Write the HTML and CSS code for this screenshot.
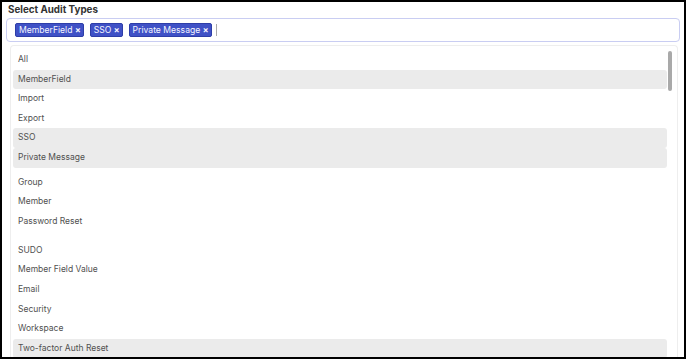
FILE: index.html
```html
<!DOCTYPE html>
<html>
<head>
<meta charset="utf-8">
<link rel="stylesheet" href="styles.css">
</head>
<body>
<div class="frame">
  <div class="title">Select Audit Types</div>
  <div class="input">
    <span class="tag">MemberField <span class="x">×</span></span>
    <span class="tag">SSO <span class="x">×</span></span>
    <span class="tag">Private Message <span class="x">×</span></span>
    <span class="caret"></span>
  </div>
  <div class="list">
    <div class="items">
      <div class="item">All</div>
      <div class="item sel">MemberField</div>
      <div class="item">Import</div>
      <div class="item">Export</div>
      <div class="item sel">SSO</div>
      <div class="item sel">Private Message</div>
      <div class="item gap1">Group</div>
      <div class="item">Member</div>
      <div class="item">Password Reset</div>
      <div class="item gap2">SUDO</div>
      <div class="item">Member Field Value</div>
      <div class="item">Email</div>
      <div class="item">Security</div>
      <div class="item">Workspace</div>
      <div class="item sel">Two-factor Auth Reset</div>
    </div>
    <div class="scroll">
      <div class="thumb"></div>
    </div>
  </div>
</div>
</body>
</html>
```

FILE: styles.css
```css
html, body {
  margin: 0;
  padding: 0;
  background: #fff;
}
.frame {
  width: 686px;
  height: 359px;
  box-sizing: border-box;
  border: 2px solid #000;
  overflow: hidden;
  font-family: Inter, "Liberation Sans", sans-serif;
  display: flex;
  flex-direction: column;
}
.title {
  font-size: 9.8px;
  font-weight: 700;
  color: #333;
  line-height: 12px;
  padding: 2px 0 0 6px;
  height: 14px;
}
.input {
  margin-left: 4px;
  width: 674px;
  height: 24px;
  box-sizing: border-box;
  border: 1px solid #c9cdf2;
  border-radius: 4px;
  display: flex;
  align-items: center;
  gap: 6px;
  padding-left: 8px;
}
.tag {
  background: #3f51c6;
  color: #f4f5ff;
  font-size: 8.6px;
  line-height: 12px;
  height: 12px;
  padding: 0 2px 0 3px;
  border-radius: 2px;
  border: 0.5px solid #2e3ea8;
  white-space: nowrap;
}
.tag .x {
  font-weight: 700;
  font-size: 8.6px;
}
.caret {
  width: 1px;
  height: 12px;
  background: #aaa;
  margin-left: -2px;
}
.list {
  margin: 3px 0 0 8px;
  width: 668px;
  flex: 1;
  box-sizing: border-box;
  border: 1px solid #eeeeee;
  border-bottom: none;
  border-radius: 4px 4px 0 0;
  display: flex;
  overflow: hidden;
}
.items {
  flex: 1;
  padding: 4px 0 0 2px;
}
.item {
  height: 19.6px;
  line-height: 19.6px;
  font-size: 8.5px;
  color: #505050;
  padding-left: 5px;
  border-radius: 3px;
  white-space: nowrap;
}
.item.sel {
  background: #ebebeb;
}
.gap1 {
  margin-top: 5px;
}
.gap2 {
  margin-top: 9.5px;
}
.scroll {
  width: 10px;
  position: relative;
}
.thumb {
  position: absolute;
  left: 1px;
  top: 5px;
  width: 4px;
  height: 40px;
  border-radius: 3px;
  background: #a9a9a9;
}
```
